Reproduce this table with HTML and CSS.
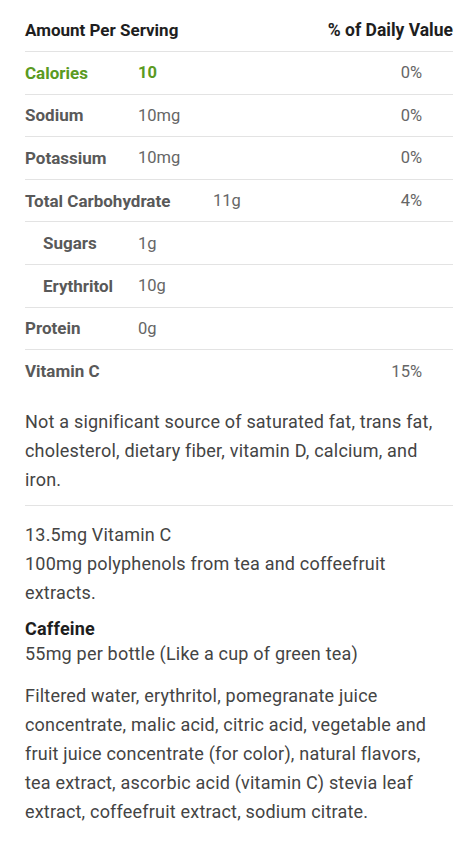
FILE: index.html
```html
<!DOCTYPE html>
<html lang="en">
<head>
    <meta charset="UTF-8">
    <meta name="viewport" content="width=device-width, initial-scale=1.0">
    <title>Nutrition Facts</title>
    <link rel="stylesheet" href="styles.css">
</head>
<body>
<div class="facts">
    <div class="facts-head">
        <span>Amount Per Serving</span>
        <span>% of Daily Value</span>
    </div>

    <div class="row calories">
        <span class="label">Calories</span>
        <span class="amount">10</span>
        <span class="pct">0%</span>
    </div>
    <div class="row">
        <span class="label">Sodium</span>
        <span class="amount">10mg</span>
        <span class="pct">0%</span>
    </div>
    <div class="row">
        <span class="label">Potassium</span>
        <span class="amount">10mg</span>
        <span class="pct">0%</span>
    </div>
    <div class="row">
        <span class="label wide">Total Carbohydrate</span>
        <span class="amount">11g</span>
        <span class="pct">4%</span>
    </div>
    <div class="row sub">
        <span class="label">Sugars</span>
        <span class="amount">1g</span>
    </div>
    <div class="row sub">
        <span class="label">Erythritol</span>
        <span class="amount">10g</span>
    </div>
    <div class="row">
        <span class="label">Protein</span>
        <span class="amount">0g</span>
    </div>
    <div class="row last">
        <span class="label">Vitamin C</span>
        <span class="amount"></span>
        <span class="pct">15%</span>
    </div>

    <p class="note">Not a significant source of saturated fat, trans fat, cholesterol, dietary fiber, vitamin D, calcium, and iron.</p>
</div>

<div class="extras">
    <p class="claims">13.5mg Vitamin C<br>100mg polyphenols from tea and coffeefruit extracts.</p>
    <h3>Caffeine</h3>
    <p class="caffeine">55mg per bottle (Like a cup of green tea)</p>
    <p class="ingredients">Filtered water, erythritol, pomegranate juice concentrate, malic acid, citric acid, vegetable and fruit juice concentrate (for color), natural flavors, tea extract, ascorbic acid (vitamin C) stevia leaf extract, coffeefruit extract, sodium citrate.</p>
</div>
</body>
</html>
```

FILE: styles.css
```css
html, body {
    margin: 0;
    padding: 0;
    background: #fff;
}
body {
    font-family: Roboto, "Noto Sans", sans-serif;
    color: #444;
    padding: 0 15px 0 25px;
}
.facts {
    border-bottom: solid 1px #e3e3e3;
}
.facts-head {
    display: flex;
    justify-content: space-between;
    align-items: center;
    height: 52px;
    padding-top: 9px;
    box-sizing: border-box;
    font-size: 17px;
    font-weight: 700;
    color: #1e1e1e;
    border-bottom: solid 1px #e3e3e3;
}
.facts-head span:last-child {
    font-size: 17.5px;
}
.row {
    display: flex;
    align-items: center;
    height: 42.6px;
    box-sizing: border-box;
    border-bottom: solid 1px #e3e3e3;
    font-size: 16.5px;
    color: #666;
}
.row.last {
    border-bottom: none;
}
.label {
    width: 113px;
    flex-shrink: 0;
    font-size: 17px;
    font-weight: 700;
    color: #595959;
}
.label.wide {
    width: 188px;
}
.sub .label {
    width: 95px;
    padding-left: 18px;
}
.amount {
    font-weight: 400;
}
.pct {
    margin-left: auto;
    margin-right: 31px;
}
.calories .label,
.calories .amount {
    color: #5a9a22;
    font-weight: 700;
}
.note {
    margin: 0;
    padding: 14px 0 11px;
    font-size: 18px;
    line-height: 29px;
    letter-spacing: 0.2px;
}
.extras {
    font-size: 18px;
    line-height: 29px;
    letter-spacing: 0.2px;
}
.extras p {
    margin: 0;
}
.extras .claims {
    padding-top: 14px;
    padding-right: 50px;
}
.extras h3 {
    margin: 10px 0 0;
    font-size: 18px;
    line-height: 24px;
    color: #1e1e1e;
}
.extras .caffeine {
    line-height: 26px;
}
.extras .ingredients {
    margin-top: 14px;
    padding-right: 20px;
}
```
